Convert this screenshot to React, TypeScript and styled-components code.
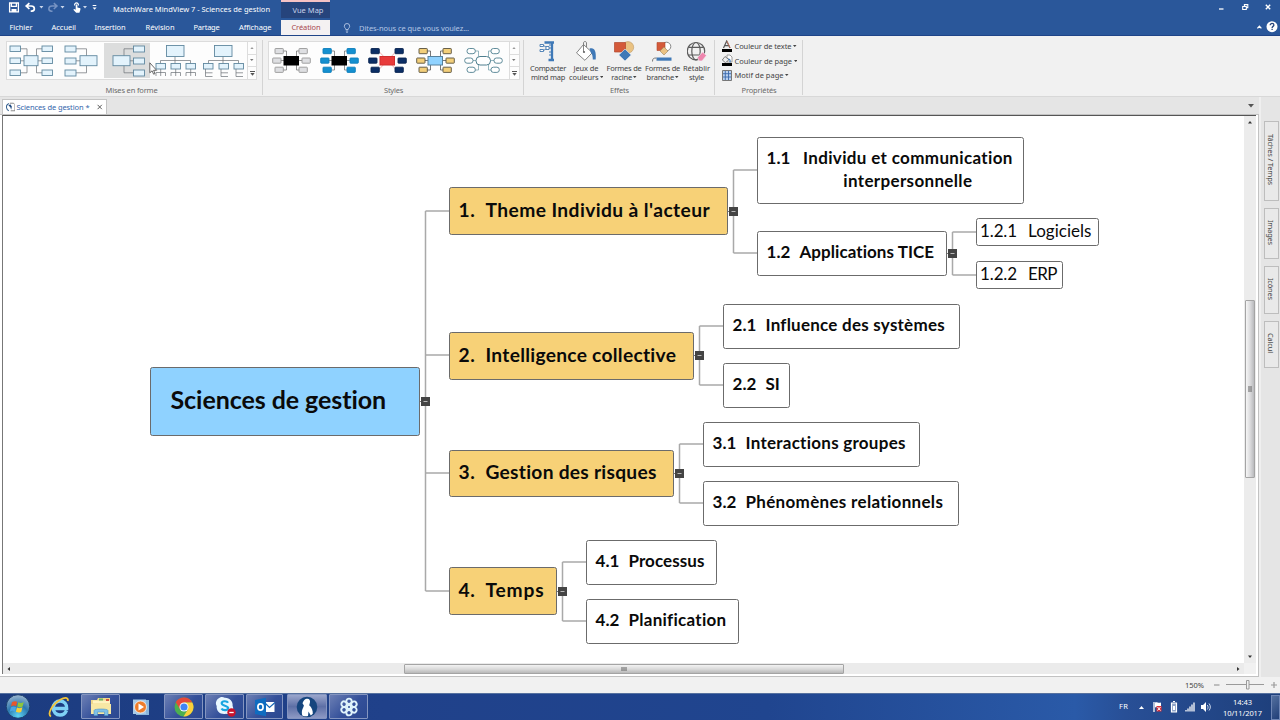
import React, { useLayoutEffect, useRef, useState } from "react";
import styled, { createGlobalStyle } from "styled-components";

const GlobalStyle = createGlobalStyle`
  * { box-sizing: border-box; }
  body { margin: 0; overflow: hidden; background: #f1f1f1; }
`;

const UI_FONT = `"Noto Sans", "Open Sans", sans-serif`;

/* ---------- Text that tracks out to a given length ---------- */

const FitText = styled.span`
  display: inline-block;
  flex: none;
  white-space: pre;
`;

function Fit({ w, children, className, vertical }: { w: number; children: string; className?: string; vertical?: boolean }) {
  const ref = useRef<HTMLSpanElement>(null);
  const [spacing, setSpacing] = useState(0);
  useLayoutEffect(() => {
    const box = ref.current!.getBoundingClientRect();
    setSpacing((w - (vertical ? box.height : box.width)) / children.length);
  }, [w, children, vertical]);
  return (
    <FitText ref={ref} className={className} style={{ letterSpacing: `${spacing}px` }}>
      {children}
    </FitText>
  );
}

/* ---------- Window ---------- */

const Window = styled.div`
  width: 1280px;
  height: 720px;
  display: flex;
  flex-direction: column;
  background: #f1f1f1;
  font-family: ${UI_FONT};
  font-size: 7.5px;
  line-height: 10px;
  color: #444;
`;

const Header = styled.header`
  height: 36px;
  flex: none;
  display: flex;
  background: #2a579a;
  border-bottom: 1px solid #1f4488;
  color: #fff;
`;

const HeaderLeft = styled.div`
  width: 281px;
  display: flex;
  flex-direction: column;
`;

const TitleRow = styled.div`
  height: 19px;
  display: flex;
  align-items: center;
`;

const QuickAccess = styled.div`
  width: 113px;
  height: 18px;
  display: flex;
`;

const TabRow = styled.nav`
  height: 17px;
  display: flex;
  align-items: center;
  padding: 1px 0 0 9.5px;
`;

const MenuTab = styled(Fit)<{ $after: number }>`
  margin-right: ${(p) => p.$after}px;
`;

const Contextual = styled.div`
  width: 49px;
  display: flex;
  flex-direction: column;
`;

const ContextTitle = styled.div`
  height: 18.5px;
  padding-left: 5px;
  border-top: 2px solid #f6c2c4;
  background: #26447c;
  color: #c9d3ea;
  display: flex;
  align-items: center;
  justify-content: center;
`;

const ActiveTab = styled.div`
  margin-top: 1.5px;
  height: 16px;
  background: #f4f1f2;
  color: #a8474f;
  display: flex;
  align-items: center;
  justify-content: center;
  padding-left: 1px;
`;

const HeaderRight = styled.div`
  flex: 1;
  display: flex;
  flex-direction: column;
`;

const WindowButtons = styled.div`
  height: 19px;
  display: flex;
  justify-content: flex-end;
`;

const SearchRow = styled.div`
  height: 17px;
  display: flex;
  align-items: center;
  justify-content: space-between;
  color: #b4c6e4;
`;

const Hint = styled.div`
  display: flex;
  align-items: center;
  gap: 8px;
  padding: 1px 0 0 13px;
`;

/* ---------- Ribbon ---------- */

const Ribbon = styled.section`
  height: 61px;
  flex: none;
  display: flex;
  padding-top: 1px;
  border-bottom: 1px solid #d8d8d8;
  background: #f1f1f1;
`;

const Group = styled.div<{ $w: number }>`
  width: ${(p) => p.$w}px;
  display: flex;
  flex-direction: column;
  align-items: center;
  justify-content: space-between;
  padding: 4px 0 1.5px;
  background: linear-gradient(#d4d4d4, #d4d4d4) right 3px / 1px 55px no-repeat;
  flex: none;
`;

const GroupLabel = styled.div`
  display: flex;
  color: #6a6a6a;
`;

const Gallery = styled.div`
  height: 39px;
  display: flex;
  background: #fdfdfd;
  border: 1px solid #dcdcdc;
`;

const Thumb = styled.div<{ $on?: boolean }>`
  width: 48px;
  height: 37px;
  background: ${(p) => (p.$on ? "linear-gradient(#dcdddd, #dcdddd) 1px 1px / 46px 35px no-repeat" : "transparent")};
  svg { display: block; }
`;

const Steps = styled.div<{ $w: number }>`
  width: ${(p) => p.$w}px;
  display: flex;
  flex-direction: column;
  border-left: 1px solid #ddd;
`;

const Step = styled.div`
  flex: 1;
  display: flex;
  align-items: center;
  justify-content: center;
  & + & { border-top: 1px solid #ddd; }
`;

const EffectRow = styled.div`
  display: flex;
  width: 100%;
  height: 41px;
  padding-left: 5px;
`;

const BigButton = styled.div<{ $w: number }>`
  width: ${(p) => p.$w}px;
  flex: none;
  display: flex;
  flex-direction: column;
  align-items: center;
  line-height: 8.5px;
  & > svg { display: block; flex: none; margin-bottom: 2px; }
`;

const Line = styled.div`
  display: flex;
  align-items: center;
  gap: 1px;
  height: 8.5px;
  flex: none;
`;

const Props = styled.div`
  width: 100%;
  height: 41px;
  margin-top: -2px;
  padding-left: 6px;
  display: flex;
  flex-direction: column;
`;

const PropRow = styled.div`
  height: 14.6px;
  flex: none;
  display: flex;
  align-items: center;
  gap: 1.5px;
  color: #444;
`;

/* ---------- Document strip and side panel ---------- */

const Workspace = styled.main`
  height: 580px;
  flex: none;
  display: flex;
  background: #e5e5e5;
`;

const DocumentArea = styled.div`
  width: 1259px;
  display: flex;
  flex-direction: column;
`;

const DocStrip = styled.div`
  height: 17px;
  flex: none;
  display: flex;
  align-items: flex-end;
  justify-content: space-between;
  padding: 0 5px 0 2px;
`;

const DocTab = styled.div`
  width: 105px;
  height: 15px;
  background: #fff;
  border: 1px solid #c4c4c4;
  border-bottom: none;
  display: flex;
  align-items: center;
  padding: 0 0 1px 2.5px;
  gap: 1.5px;
  color: #3465ab;
`;

const StripArrow = styled.div`
  height: 10px;
  display: flex;
`;

const Frame = styled.div`
  flex: 1;
  display: flex;
  border: 1px solid #c2c2c2;
  border-left: none;
  background: #fff;
  padding: 0 2px 2px 2px;
  min-height: 0;
`;

const Sheet = styled.div`
  flex: 1;
  display: grid;
  grid-template-columns: 1fr 12px;
  grid-template-rows: 1fr 11px;
  border-top: 1px solid #555;
  border-left: 1px solid #777;
`;

const Canvas = styled.div`
  position: relative;
  overflow: hidden;
  background: #fff;
`;

const VScroll = styled.div`
  display: flex;
  flex-direction: column;
  align-items: center;
  justify-content: space-between;
  padding-right: 1px;
  background: #ececec;
`;

const VThumb = styled.div`
  width: 10px;
  height: 178px;
  margin: 172px 0 auto;
  border: 1px solid #a4a4a4;
  border-radius: 1px;
  background: linear-gradient(90deg, #f6f6f6, #dcdcde 50%, #b9babd);
  display: flex;
  align-items: center;
  justify-content: center;
`;

const HScroll = styled.div`
  display: flex;
  align-items: center;
  justify-content: space-between;
  background: #ebebeb;
`;

const HThumb = styled.div`
  width: 440px;
  height: 10px;
  border: 1px solid #a4a4a4;
  border-radius: 1px;
  background: linear-gradient(#f2f2f2, #dadada 50%, #b8b8b8);
  display: flex;
  align-items: center;
  justify-content: center;
`;

const ScrollCorner = styled.div`
  background: #f1f1f1;
`;

const SidePanel = styled.aside`
  flex: 1;
  border-left: 2px solid #efefef;
  padding: 24px 0 0 3px;
  display: flex;
  flex-direction: column;
  gap: 7px;
`;

const SideTab = styled.div<{ $h: number }>`
  width: 15px;
  height: ${(p) => p.$h}px;
  flex: none;
  border: 1px solid #bdbdbd;
  background: #e9e9e9;
  writing-mode: vertical-rl;
  display: flex;
  align-items: center;
  justify-content: center;
  padding: 0 1px 3px 0;
`;

/* ---------- Mind map ---------- */

type Level = 0 | 1 | 2 | 3;

const nodeFill = ["#8fd2ff", "#f7d177", "#fff", "#fff"];
const nodeSize = [25, 19.2, 17, 17];
const nodeGap = [0, 10, 9, 11];
const nodeLift = [5, 4, 4, 3];
const nodeInset = [19.5, 8.5, 8.5, 3];

const NodeBox = styled.div<{ $x: number; $y: number; $w: number; $h: number; $level: Level }>`
  position: absolute;
  left: ${(p) => p.$x - 3}px;
  top: ${(p) => p.$y - 116}px;
  width: ${(p) => p.$w}px;
  height: ${(p) => p.$h}px;
  padding: 0 0 ${(p) => nodeLift[p.$level]}px ${(p) => nodeInset[p.$level]}px;
  display: flex;
  align-items: center;
  border: 1px solid #6b6b6b;
  border-radius: 2.5px;
  background: ${(p) => nodeFill[p.$level]};
  color: #0a0a0a;
  font-family: Lato, "Open Sans", sans-serif;
  font-size: ${(p) => nodeSize[p.$level]}px;
  font-weight: ${(p) => (p.$level === 3 ? 400 : 700)};
  line-height: 23px;
`;

const NodeNumber = styled.div<{ $level: Level; $gap?: number; $top?: boolean }>`
  display: flex;
  margin-right: ${(p) => p.$gap ?? nodeGap[p.$level]}px;
  align-self: ${(p) => (p.$top ? "flex-start" : "center")};
  margin-top: ${(p) => (p.$top ? 8 : 0)}px;
`;

const NodeLines = styled.div`
  display: flex;
  flex-direction: column;
  align-items: center;
`;

const Links = styled.svg`
  position: absolute;
  left: -3px;
  top: -116px;
`;

interface MapNode {
  x: number; y: number; w: number; h: number; level: Level;
  num?: string; numW?: number; gap?: number;
  lines: [string, number][];
}

const nodes: MapNode[] = [
  { x: 150, y: 367, w: 270, h: 69, level: 0, lines: [["Sciences de gestion", 216]] },
  { x: 449, y: 187, w: 279, h: 48, level: 1, num: "1.", numW: 17, lines: [["Theme Individu à l'acteur", 224.5]] },
  { x: 449, y: 332, w: 245, h: 48, level: 1, num: "2.", numW: 17, lines: [["Intelligence collective", 191]] },
  { x: 449, y: 450, w: 225, h: 47, level: 1, num: "3.", numW: 17, lines: [["Gestion des risques", 171.5]] },
  { x: 449, y: 567, w: 108, h: 48, level: 1, num: "4.", numW: 17, lines: [["Temps", 59]] },
  { x: 757, y: 137, w: 267, h: 67, level: 2, num: "1.1", numW: 24, gap: 12.5, lines: [["Individu et communication", 210], ["interpersonnelle", 129]] },
  { x: 757, y: 231, w: 190, h: 45, level: 2, num: "1.2", numW: 24, lines: [["Applications TICE", 135]] },
  { x: 723, y: 304, w: 237, h: 45, level: 2, num: "2.1", numW: 24, lines: [["Influence des systèmes", 179.5]] },
  { x: 723, y: 363, w: 67, h: 45, level: 2, num: "2.2", numW: 24, lines: [["SI", 14]] },
  { x: 703, y: 422, w: 217, h: 45, level: 2, num: "3.1", numW: 24, lines: [["Interactions groupes", 160.5]] },
  { x: 703, y: 481, w: 256, h: 45, level: 2, num: "3.2", numW: 24, lines: [["Phénomènes relationnels", 198]] },
  { x: 586, y: 540, w: 131, h: 45, level: 2, num: "4.1", numW: 24, lines: [["Processus", 76]] },
  { x: 586, y: 599, w: 153, h: 45, level: 2, num: "4.2", numW: 24, lines: [["Planification", 98]] },
  { x: 976, y: 218, w: 123, h: 28, level: 3, num: "1.2.1", numW: 37, lines: [["Logiciels", 63.5]] },
  { x: 976, y: 261, w: 87, h: 28, level: 3, num: "1.2.2", numW: 37, lines: [["ERP", 29]] },
];

const forks = [
  { x: 425.5, from: 420, y: 401.5, to: 449, ends: [211, 355, 473, 591] },
  { x: 733.5, from: 728, y: 211.5, to: 757, ends: [170, 253] },
  { x: 952.5, from: 947, y: 253.5, to: 976, ends: [232, 275] },
  { x: 699.5, from: 694, y: 355.5, to: 723, ends: [326, 385] },
  { x: 679.5, from: 674, y: 473.5, to: 703, ends: [444, 503] },
  { x: 562.5, from: 557, y: 591.5, to: 586, ends: [562, 621] },
];

function MindMap() {
  return (
    <Canvas>
      <Links width="1245" height="663" viewBox="0 0 1245 663">
        {forks.map((f) => (
          <g key={f.x}>
            <path
              d={`M${f.x} ${f.ends[0]}V${f.ends[f.ends.length - 1]}` + f.ends.map((e) => `M${f.x} ${e}H${f.to}`).join("")}
              fill="none" stroke="#a9a9a9" strokeWidth="1.5"
            />
            <path d={`M${f.from} ${f.y}H${f.x}`} stroke="#777" />
            <rect x={f.x - 4.5} y={f.y - 4.5} width="9" height="9" fill="#444" />
            <path d={`M${f.x - 2} ${f.y}h4`} stroke="#b8b8b8" />
          </g>
        ))}
      </Links>
      {nodes.map((n) => (
        <NodeBox key={n.lines[0][0]} $x={n.x} $y={n.y} $w={n.w} $h={n.h} $level={n.level}>
          {n.num && (
            <NodeNumber $level={n.level} $gap={n.gap} $top={n.lines.length > 1}>
              <Fit w={n.numW!}>{n.num}</Fit>
            </NodeNumber>
          )}
          <NodeLines>
            {n.lines.map(([t, w]) => <Fit key={t} w={w}>{t}</Fit>)}
          </NodeLines>
        </NodeBox>
      ))}
    </Canvas>
  );
}

/* ---------- Status bar and taskbar ---------- */

const StatusBar = styled.div`
  height: 16px;
  flex: none;
  display: flex;
  align-items: center;
  justify-content: flex-end;
  gap: 9px;
  padding-right: 2px;
  background: #f1f1f1;
`;

const Taskbar = styled.footer`
  height: 27px;
  flex: none;
  display: flex;
  justify-content: space-between;
  border-top: 1px solid #56719f;
  background: linear-gradient(90deg, #1c3c80, #20418a 30%, #20458f 60%, #2a5aa8 84%, #284f96 88%, #1e3f7b);
  color: #fff;
`;

const Apps = styled.div`
  display: flex;
`;

const AppButton = styled.div<{ $w: number; $state?: "open" | "active"; $gap?: number }>`
  width: ${(p) => p.$w}px;
  margin-left: ${(p) => p.$gap ?? 0}px;
  height: 25px;
  display: flex;
  align-items: center;
  justify-content: center;
  border-radius: 1px;
  border: 1px solid ${(p) => (p.$state ? "#8495c0" : "transparent")};
  background: ${(p) =>
    p.$state === "active"
      ? "linear-gradient(#9aa6cc, #5d6fa6 50%, #8d99c4)"
      : p.$state === "open"
        ? "linear-gradient(135deg, #6c7fb4, #34509a 55%, #2b4890)"
        : "transparent"};
  svg { display: block; flex: none; }
`;

const Tray = styled.div`
  display: flex;
  align-items: center;
`;

const Language = styled.div`
  display: flex;
  width: 17px;
  padding-bottom: 3px;
`;

const Clock = styled.div`
  display: flex;
  flex-direction: column;
  align-items: center;
  line-height: 11px;
  margin-left: 9px;
  width: 43px;
  padding-top: 1px;
`;

const ShowDesktop = styled.div`
  width: 9px;
  height: 25px;
  margin-left: 7px;
  border: 1px solid #6d85b4;
  background: linear-gradient(135deg, #54709f, #203f78);
`;

/* ---------- Small drawings ---------- */

const Caret = ({ c = "#444", s = 4 }: { c?: string; s?: number }) => (
  <svg width={s} height={s * 0.6} viewBox="0 0 5 3"><path d="M0 0h5L2.5 3z" fill={c} /></svg>
);

const UpCaret = ({ c = "#444" }: { c?: string }) => (
  <svg width="4" height="2.5" viewBox="0 0 5 3"><path d="M0 3h5L2.5 0z" fill={c} /></svg>
);

const QuickIcons = () => (
  <svg width="113" height="15" viewBox="0 0 113 15" fill="none" stroke="#fff">
    <path d="M9.6 3h8.8v8.8H9.6z M11.4 3.2v3.2h5V3.2" strokeWidth="1.3" />
    <path d="M11.5 9h5v3h-5z" fill="#fff" stroke="none" />
    <path d="M29.4 3.1 26.2 6l3.2 3M26.6 6h4.6c4 0 4.2 4.8.5 5.2h-1" strokeWidth="1.7" />
    <path d="M39.4 6h4l-2 2.4zM60.5 6h4l-2 2.4zM83 6h4l-2 2.4z" fill="#c9d5ea" stroke="none" />
    <path d="M53.8 3.1 57 6l-3.2 3M56.6 6H52c-4 0-4.2 4.8-.5 5.2h1" stroke="#7693c3" strokeWidth="1.5" />
    <path d="M74.6 5.5c-.6-3.5 4.4-3.5 3.8 0" strokeWidth="1.1" />
    <path d="M75.7 4.5h1.7v3l3 .7v1.6l-1 3h-3.2L73.3 9.8l.9-.9 1.5.8z" fill="#fff" stroke="none" />
    <path d="M92.7 5.5h3.6" />
    <path d="M92.6 7.4h4l-2 2.4z" fill="#fff" stroke="none" />
  </svg>
);

const WindowIcons = () => (
  <svg width="67" height="19" viewBox="1213 0 67 19" fill="none" stroke="#fff">
    <path d="M1219 9h4.5" strokeWidth="1.3" />
    <path d="M1242.7 6.5h3.6v3h-3.6zM1244.4 6.2V4.6h3.4v3h-1.4" strokeWidth="1.1" />
    <path d="m1265.8 4.8 4.4 4.4m0-4.4-4.4 4.4" strokeWidth="1.4" />
  </svg>
);

const HelpIcons = () => (
  <svg width="26" height="15" viewBox="1254 20 26 15" fill="none" stroke="#fff">
    <path d="m1257.4 28.4 2-2.2 2 2.2" strokeWidth="1.3" />
    <circle cx="1272" cy="26.7" r="5.5" fill="#fff" stroke="none" />
    <path d="M1270.2 25.2c0-2.4 3.7-2.2 3.7-.1 0 1.4-1.8 1.2-1.8 2.8M1272.1 28.8v1.3" stroke="#26447c" strokeWidth="1.3" />
  </svg>
);

const Bulb = () => (
  <svg width="8" height="10" viewBox="0 0 8 10" fill="none" stroke="#b4c6e4" strokeWidth=".9">
    <path d="M2.8 6.5C2.8 5.2 1.3 4.8 1.3 3.2a2.7 2.7 0 0 1 5.4 0c0 1.6-1.5 2-1.5 3.3zM2.8 8h2.4M3.2 9.3h1.6" />
  </svg>
);

const lineC = "#6a7075";
const box = (x: number, y: number, w: number, h: number) => (
  <rect key={`${x}-${y}`} x={x} y={y} width={w} height={h} fill="#e3f3fc" stroke="#60889f" strokeWidth=".9" />
);

const layouts = [
  <g key="both">
    <path d="M12 6.8h6.5v24H12M12 18.8h27M34 6.8h-6v24h6" fill="none" stroke={lineC} strokeWidth=".7" />
    {[4, 16, 28].flatMap((y) => [box(1.5, y, 10.5, 5.5), box(33.5, y, 10.5, 5.5)])}
    {box(15.5, 13.7, 14, 10)}
  </g>,
  <g key="left">
    <path d="M19 6.8h11v24H19M19 18.8h6" fill="none" stroke={lineC} strokeWidth=".7" />
    {[4, 16, 28].map((y) => box(8.5, y, 11, 6))}
    {box(23.5, 13.7, 17, 10)}
  </g>,
  <g key="right">
    <path d="M30 6.8H19.5v24H30M24 18.8h6" fill="none" stroke={lineC} strokeWidth=".7" />
    {[4, 16, 28].map((y) => box(29, y, 11, 6))}
    {box(8.5, 13.7, 17, 10)}
  </g>,
  <g key="down">
    <path d="M22.5 14v8M8 22v-3.5h30V22" fill="none" stroke={lineC} strokeWidth=".7" />
    {box(14, 3.5, 17.5, 11)}
    {[3.5, 18.5, 33.5].map((x) => box(x, 21.5, 9.5, 5.5))}
    {[3.5, 18.5, 33.5].map((x) => <path key={x} d={`M${x + 4.7} 27v7M${x} 34v-3.5h9.5V34`} fill="none" stroke={lineC} strokeWidth=".7" />)}
  </g>,
  <g key="tree">
    <path d="M22.5 14v8M8 22v-3.5h30V22" fill="none" stroke={lineC} strokeWidth=".7" />
    {box(14, 3.5, 17.5, 11)}
    {[3, 18.5, 33.5].map((x) => box(x, 21.5, 9.5, 5.5))}
    {[3, 18.5, 33.5].map((x) => <path key={x} d={`M${x + 2} 27v7.5h7M${x + 2} 30.8h7`} fill="none" stroke={lineC} strokeWidth=".7" />)}
  </g>,
];

interface Palette { leaf: string; edge: string; core: string; coreEdge: string; link: string; round?: boolean; x?: boolean }

const palettes: Palette[] = [
  { leaf: "#dedfe2", edge: "#999", core: "#000", coreEdge: "#000", link: "#777" },
  { leaf: "#1490d0", edge: "#0f7fbb", core: "#000", coreEdge: "#000", link: "#777" },
  { leaf: "#0c2f66", edge: "#0a2550", core: "#e83a3a", coreEdge: "#d02f2f", link: "#f09a9a", x: true },
  { leaf: "#f3cf7a", edge: "#57503e", core: "#8fd2ff", coreEdge: "#56809c", link: "#555" },
  { leaf: "#fff", edge: "#4e7f8f", core: "#fff", coreEdge: "#4e7f8f", link: "#7ba3ae", round: true },
];

const StyleThumb = ({ p }: { p: Palette }) => (
  <svg width="48" height="37" viewBox="1.5 0 48 37">
    <path
      d={p.x ? "M15 9l18 19M33 9 15 28" : "M15 9h4v19h-4M33 9h-4v19h4M12 18.5h25"}
      fill="none" stroke={p.link} strokeWidth=".8"
    />
    {[[7.5, 6.5], [31.5, 6.5], [5.2, 16], [34.5, 16], [7.5, 25.2], [31.5, 25.2]].map(([x, y]) => (
      <rect key={`${x}${y}`} x={x} y={y} width="8.3" height="5.2" rx={p.round ? 2.4 : 0.6} fill={p.leaf} stroke={p.edge} strokeWidth=".9" />
    ))}
    <rect x="16.5" y="14.5" width="14.5" height="8.5" rx={p.round ? 4 : 0} fill={p.core} stroke={p.coreEdge} />
  </svg>
);

const effectIcons = {
  compact: (
    <svg width="20" height="21" viewBox="0 0 20 21">
      <path d="M6.5 1.5H16M14 1v18M10.5 19H16" stroke="#3f79b7" strokeWidth="2.3" fill="none" />
      <path d="M11 4h3M11 7h3M11 11h3M11 14h3" stroke="#3f79b7" />
      <path d="M2 3.5h3.5v2H2zM2 8.5h3.5v2H2zM8 5.5h3v3H8zM5.5 4.5 8 6M5.5 9.5 8 8" fill="#fff" stroke="#4479b0" strokeWidth=".9" />
    </svg>
  ),
  bucket: (
    <svg width="22" height="21" viewBox="0 0 22 21">
      <path d="m8.5 3.5 8.8 8.2-7.4 7.6-8.4-7.4z" fill="#fff" stroke="#777" strokeWidth=".9" />
      <path d="M8.5 11V2c0-2 3-2 3 0v4" fill="none" stroke="#777" strokeWidth=".9" />
      <circle cx="9" cy="11" r="1.1" fill="#666" />
      <path d="M14.5 7.5c4.5-1.5 7 1.5 6.2 11h-2.9c0-3.5-.6-5.5-2-7z" fill="#3f79b7" />
    </svg>
  ),
  root: (
    <svg width="22" height="21" viewBox="0 0 22 21">
      <circle cx="15" cy="6.3" r="5.7" fill="#eac282" stroke="#bd9b68" strokeWidth=".6" />
      <path d="M1.5 1.5h11v9.5h-11z" fill="#d45a3a" stroke="#b0482e" strokeWidth=".7" />
      <path d="m12 8 6.2 6-6.2 6-6.2-6z" fill="#3f79b7" stroke="#f1f1f1" strokeWidth=".6" />
    </svg>
  ),
  branch: (
    <svg width="22" height="21" viewBox="1 0 22 21">
      <circle cx="15.5" cy="5.5" r="4.3" fill="#fff" stroke="#888" />
      <path d="M6 1.5h8v8H6z" fill="#d45a3a" stroke="#b0482e" strokeWidth=".6" />
      <path d="m13 6 4 4-4 4-4-4z" fill="#eac282" stroke="#9a845f" strokeWidth=".6" />
      <path d="M5.5 16.5h15v3.2h-15z" fill="#3f79b7" />
      <path d="M1.5 20.5c0-3 1-3.5 4-3.5" fill="none" stroke="#777" />
    </svg>
  ),
  reset: (
    <svg width="20" height="21" viewBox="0 0 20 21">
      <g fill="none" stroke="#5d5d5d" strokeWidth="1.2">
        <circle cx="9" cy="10.2" r="8.7" />
        <ellipse cx="9" cy="10.2" rx="4.2" ry="8.7" />
        <path d="M1.2 6.3h15.6M1.2 14h15.6" />
      </g>
      <path d="m10.5 16.5 5-5.5 4 3.5-4.5 5.5h-3z" fill="#ee86ae" stroke="#f1f1f1" strokeWidth=".7" />
    </svg>
  ),
};

const TextColorIcon = () => (
  <svg width="12" height="13" viewBox="0 0 12 13">
    <path d="M2.5 8 5.7 1 9 8M3.7 5.6h4" fill="none" stroke="#555" strokeWidth="1.2" />
    <path d="M6 1.2 9.2 8" stroke="#d8795f" strokeWidth=".8" fill="none" />
    <path d="M1 9h10v3H1z" fill="#000" />
  </svg>
);

const PageColorIcon = () => (
  <svg width="12" height="13" viewBox="0 0 12 13">
    <path d="M6 1h3l2 2v5H6z" fill="#fff" stroke="#888" strokeWidth=".8" />
    <path d="m4 2.5 4 3.2-3.5 3L1.3 6z" fill="#eee" stroke="#666" strokeWidth=".8" />
    <path d="M7 5c2 0 2.4 1.5 2 3.3" fill="none" stroke="#3f79b7" strokeWidth="1.2" />
    <path d="M1 9h10v3H1z" fill="#000" />
  </svg>
);

const PatternIcon = () => (
  <svg width="12" height="13" viewBox="0 0 12 13">
    <path d="M1.5 1.5h9v10h-9z" fill="#b9d0ee" stroke="#777" />
    <path d="M4.3 2v9M7.5 2v9M2 4.7h8M2 8h8" stroke="#3a69ac" strokeWidth=".9" />
  </svg>
);

const DocIcon = () => (
  <svg width="10" height="10" viewBox="0 0 10 10">
    <path d="M3 1.2C1 2 .3 4 .5 5.5.7 7 1.5 8.5 3 9" fill="none" stroke="#35608f" strokeWidth="1.1" />
    <path d="M4 1h4l1.5 1.5V9H5" fill="#fff" stroke="#666" strokeWidth=".8" />
    <path d="M2.5 3.5 4.5 2l1.7 2.5L5.5 8 4.5 5z" fill="#1f4a80" />
  </svg>
);

const appIcons = {
  start: (
    <svg width="26" height="25" viewBox="0 0 26 25">
      <defs>
        <radialGradient id="orb" cx=".5" cy=".9" r=".9">
          <stop offset="0" stopColor="#5fd6f4" /><stop offset=".5" stopColor="#2b78b0" /><stop offset="1" stopColor="#9fb7cf" />
        </radialGradient>
      </defs>
      <circle cx="13" cy="12.5" r="11.8" fill="url(#orb)" stroke="#1b3f6e" />
      <path d="M7 8.2c2-1.4 3.6-1.2 5.2-.4l-1 4.4c-1.7-.9-3.3-.9-5.2.3z" fill="#e8562b" />
      <path d="M13.2 8.2c2 1 3.6 1 5.6-.3l-1.2 4.6c-1.8 1.2-3.6 1.1-5.4.1z" fill="#8cc63c" />
      <path d="M5.8 13.4c1.9-1.2 3.5-1.1 5.2-.3L9.9 17.4c-1.6-.8-3.2-.8-5.1.3z" fill="#4aa5e4" />
      <path d="M12 13.5c1.9 1 3.6 1 5.4-.2l-1.1 4.4c-1.8 1.2-3.5 1.1-5.4.1z" fill="#fbce33" />
    </svg>
  ),
  ie: (
    <svg width="22" height="22" viewBox="0 0 22 22" fill="none">
      <path d="M18.5 14.5C17 18 14.5 19 12 19c-4 0-6.8-3-6.8-7s3-7 6.9-7c4.2 0 6.8 3 6.6 7.5H6.5" stroke="#7fd1f5" strokeWidth="3.3" />
      <path d="M3 20.5C-1 18 4 8.5 12.5 3.5c4-2.4 8-2.6 7.3 1.5" stroke="#f2c43a" strokeWidth="1.8" />
    </svg>
  ),
  explorer: (
    <svg width="22" height="20" viewBox="0 0 22 20">
      <path d="M1 3h6l1-2h12v16H1z" fill="#efd98b" />
      <path d="M3 3.5h17v3H3z" fill="#fff4c0" />
      <path d="M9 1.5h4v2H9z" fill="#6bb463" /><path d="M16 2h3v2h-3z" fill="#d5533f" />
      <path d="M1 7h20v10H1z" fill="#f7e8a4" />
      <path d="M4 18.5v-5c0-2 14-2 14 0v5h-3.5V15h-7v3.5z" fill="#7fc0e8" stroke="#4c93c4" strokeWidth=".6" />
    </svg>
  ),
  player: (
    <svg width="18" height="18" viewBox="0 0 18 18">
      <path d="M4 2h13v15H4z" fill="#8ab7dc" /><path d="M1 1.5h13v14.5H1z" fill="#a7cbe8" />
      <circle cx="8.5" cy="9" r="6" fill="#ee7d2b" stroke="#fff" strokeWidth=".7" />
      <path d="M6.5 5.5 12 9l-5.5 3.5z" fill="#fff" />
    </svg>
  ),
  chrome: (
    <svg width="20" height="20" viewBox="0 0 20 20">
      <circle cx="10" cy="10" r="9.5" fill="#4caf50" />
      <path d="M1.8 5.2A9.5 9.5 0 0 1 18.3 5.5H10L6 12.3z" fill="#e5493a" />
      <path d="M18.3 5.5A9.5 9.5 0 0 1 9.5 19.5L14 12.3 14 8 10 5.5z" fill="#fcd03b" />
      <circle cx="10" cy="10" r="4.5" fill="#fff" /><circle cx="10" cy="10" r="3.6" fill="#4285f4" />
    </svg>
  ),
  skype: (
    <svg width="22" height="22" viewBox="0 0 22 22">
      <path d="M6 1.5c2-.8 3.5-.3 4.6.3 5-.3 8.6 3.7 8 8.2 2 4-1.2 9-6.6 7.8C6.5 19 2 15 2.7 10 .8 7 2.5 3 6 1.5z" fill="#e8f7ff" />
      <path d="M14 6.8C13 4.6 7.7 4.7 7.7 7.3c0 3 6.4 1.8 6.4 4.8 0 2.6-5.4 2.7-6.6.3" fill="none" stroke="#18a5e0" strokeWidth="2.2" />
      <circle cx="17.5" cy="16.5" r="4.2" fill="#c8142d" /><path d="M15.3 16.5h4.4" stroke="#fff" strokeWidth="1.3" />
    </svg>
  ),
  outlook: (
    <svg width="22" height="20" viewBox="0 0 22 20">
      <path d="M10 5h10.5v10H10z" fill="#fff" /><path d="m11 6 4.5 4.5L21 5.5" stroke="#1766b5" strokeWidth="1.2" fill="none" />
      <path d="M1 3 12 .8v18.4L1 17z" fill="#0f6cc0" />
      <ellipse cx="6.5" cy="10" rx="2.6" ry="3.2" fill="none" stroke="#fff" strokeWidth="1.7" />
    </svg>
  ),
  mind: (
    <svg width="22" height="22" viewBox="0 0 22 22">
      <circle cx="11" cy="11" r="10.3" fill="#15457e" />
      <path d="M10.5 2.8c2.8-.6 4 1.500 3.400 4l-.7 2.500c2.600 2 3.800 5.500 3.600 8.500l-2 1.700-2.300-4-.5 4.500c-2 .6-4.200.4-5.700-.6-1.300-4.600.7-6.600 1.600-9.800L6.500 7.200C7.500 4.500 8.500 3.300 10.500 2.800z" fill="#fff" />
    </svg>
  ),
  flower: (
    <svg width="20" height="20" viewBox="0 0 20 20" fill="none" stroke="#dff3fb" strokeWidth="1.9">
      {[0, 60, 120, 180, 240, 300].map((a) => (
        <circle key={a} cx="10" cy="4.3" r="2.7" transform={`rotate(${a} 10 10)`} />
      ))}
      <circle cx="10" cy="10" r="2" />
    </svg>
  ),
};

const TrayIcons = () => (
  <svg width="76" height="16" viewBox="1137 699 76 16">
    <path d="M1140 709h5l-2.5-3z" fill="#fff" />
    <path d="M1155 702v10" stroke="#fff" strokeWidth="1.3" />
    <path d="M1156 702.5c2-1 3 1 6 0v5c-3 1-4-1-6 0z" fill="#fff" />
    <path d="M1157.5 706h5v5.5h-5z" fill="#d9313b" />
    <path d="m1158.5 707 3 3.5m0-3.5-3 3.5" stroke="#fff" strokeWidth="1" />
    <path d="M1172.5 703h5v9h-5zM1174 701.5h2" fill="#8ea3c8" stroke="#fff" strokeWidth="1.2" />
    <path d="M1174 706h2v4h-2z" fill="#fff" />
    <path d="M1187 710v1.5M1189 708.5v3M1191 706.5v5M1193 704.5v7M1195 702.5v9" stroke="#fff" strokeWidth="1.3" />
    <path d="M1202 705h2l3-3v10l-3-3h-2z" fill="#fff" />
    <path d="M1208.3 705c1 1.5 1 3 0 4.5M1210 703.5c1.8 2 1.8 5 0 7" fill="none" stroke="#dce6f6" strokeWidth=".9" />
  </svg>
);

const ZoomSlider = () => (
  <svg width="65" height="12" viewBox="1213 680 65 12" stroke="#9a9a9a" fill="none">
    <path d="M1214 686h5.5" strokeWidth="1.2" />
    <path d="M1226 685.5h38" />
    <path d="M1246.5 681.5h2.5v8.5h-2.5z" fill="#f1f1f1" />
    <path d="M1271 686h6M1274 683v6" strokeWidth="1.2" />
  </svg>
);

const Cursor = styled.svg`
  position: absolute;
  left: 149px;
  top: 62px;
`;

function GallerySteps({ w }: { w: number }) {
  return (
    <Steps $w={w}>
      <Step><UpCaret c="#999" /></Step>
      <Step><Caret c="#777" s={3.5} /></Step>
      <Step>
        <svg width="5" height="5" viewBox="0 0 5 5"><path d="M0 .5h5" stroke="#555" /><path d="M.3 2h4.4L2.5 4.7z" fill="#555" /></svg>
      </Step>
    </Steps>
  );
}

const taskApps: { id: keyof typeof appIcons; w: number; gap?: number; state?: "open" | "active" }[] = [
  { id: "start", w: 36 },
  { id: "ie", w: 40, gap: 3 },
  { id: "explorer", w: 39, gap: 2, state: "open" },
  { id: "player", w: 40, gap: 1 },
  { id: "chrome", w: 39, gap: 3, state: "open" },
  { id: "skype", w: 39, gap: 2, state: "open" },
  { id: "outlook", w: 37, gap: 2, state: "open" },
  { id: "mind", w: 40, gap: 4, state: "active" },
  { id: "flower", w: 39, gap: 2, state: "open" },
];

export default function App() {
  return (
    <Window>
      <GlobalStyle />
      <Header>
        <HeaderLeft>
          <TitleRow>
            <QuickAccess><QuickIcons /></QuickAccess>
            <Fit w={157}>MatchWare MindView 7 - Sciences de gestion</Fit>
          </TitleRow>
          <TabRow>
            <MenuTab w={23} $after={19}>Fichier</MenuTab>
            <MenuTab w={24.5} $after={18.5}>Accueil</MenuTab>
            <MenuTab w={31} $after={20}>Insertion</MenuTab>
            <MenuTab w={29} $after={19}>Révision</MenuTab>
            <MenuTab w={26} $after={19.5}>Partage</MenuTab>
            <MenuTab w={32.5} $after={0}>Affichage</MenuTab>
          </TabRow>
        </HeaderLeft>
        <Contextual>
          <ContextTitle><Fit w={31}>Vue Map</Fit></ContextTitle>
          <ActiveTab><Fit w={29}>Création</Fit></ActiveTab>
        </Contextual>
        <HeaderRight>
          <WindowButtons><WindowIcons /></WindowButtons>
          <SearchRow>
            <Hint><Bulb /><Fit w={110}>Dites-nous ce que vous voulez...</Fit></Hint>
            <HelpIcons />
          </SearchRow>
        </HeaderRight>
      </Header>

      <Ribbon>
        <Group $w={263}>
          <Gallery>
            {layouts.map((g, i) => (
              <Thumb key={i} $on={i === 2}><svg width="48" height="37" viewBox="-1.5 0 48 37">{g}</svg></Thumb>
            ))}
            <GallerySteps w={9} />
          </Gallery>
          <GroupLabel><Fit w={52}>Mises en forme</Fit></GroupLabel>
        </Group>
        <Group $w={261}>
          <Gallery>
            {palettes.map((p) => <Thumb key={p.leaf}><StyleThumb p={p} /></Thumb>)}
            <GallerySteps w={10} />
          </Gallery>
          <GroupLabel><Fit w={19}>Styles</Fit></GroupLabel>
        </Group>
        <Group $w={191}>
          <EffectRow>
            <BigButton $w={38}>
              {effectIcons.compact}
              <Line><Fit w={36}>Compacter</Fit></Line>
              <Line><Fit w={34}>mind map</Fit></Line>
            </BigButton>
            <BigButton $w={38}>
              {effectIcons.bucket}
              <Line><Fit w={25}>Jeux de</Fit></Line>
              <Line><Fit w={29.5}>couleurs</Fit><Caret s={3.5} /></Line>
            </BigButton>
            <BigButton $w={38}>
              {effectIcons.root}
              <Line><Fit w={35}>Formes de</Fit></Line>
              <Line><Fit w={21}>racine</Fit><Caret s={3.5} /></Line>
            </BigButton>
            <BigButton $w={39}>
              {effectIcons.branch}
              <Line><Fit w={35}>Formes de</Fit></Line>
              <Line><Fit w={27.5}>branche</Fit><Caret s={3.5} /></Line>
            </BigButton>
            <BigButton $w={29}>
              {effectIcons.reset}
              <Line><Fit w={27}>Rétablir</Fit></Line>
              <Line><Fit w={15}>style</Fit></Line>
            </BigButton>
          </EffectRow>
          <GroupLabel><Fit w={19}>Effets</Fit></GroupLabel>
        </Group>
        <Group $w={88}>
          <Props>
            <PropRow><TextColorIcon /><Fit w={57}>Couleur de texte</Fit><Caret s={3.5} /></PropRow>
            <PropRow><PageColorIcon /><Fit w={57.5}>Couleur de page</Fit><Caret s={3.5} /></PropRow>
            <PropRow><PatternIcon /><Fit w={49}>Motif de page</Fit><Caret s={3.5} /></PropRow>
          </Props>
          <GroupLabel><Fit w={35}>Propriétés</Fit></GroupLabel>
        </Group>
      </Ribbon>

      <Workspace>
        <DocumentArea>
          <DocStrip>
            <DocTab>
              <DocIcon />
              <Fit w={73}>Sciences de gestion *</Fit>
              <svg width="16" height="6" viewBox="1.5 0 16 6"><path d="m8.5.7 4.5 4.6m0-4.6L8.5 5.3" stroke="#555" /></svg>
            </DocTab>
            <StripArrow><Caret c="#555" s={6} /></StripArrow>
          </DocStrip>
          <Frame>
            <Sheet>
              <MindMap />
              <VScroll>
                <svg width="10" height="12" viewBox="0 0 10 12"><path d="M3 7.5h4L5 5z" fill="#333" /></svg>
                <VThumb><svg width="6" height="6" viewBox="0 0 6 6"><path d="M1 1h4M1 3h4M1 5h4" stroke="#555" strokeWidth=".9" /></svg></VThumb>
                <svg width="10" height="12" viewBox="0 0 10 12"><path d="M3 4.5h4L5 7z" fill="#333" /></svg>
              </VScroll>
              <HScroll>
                <svg width="11" height="10" viewBox="0 0 11 10"><path d="M7 3v4L4.5 5z" fill="#333" /></svg>
                <HThumb><svg width="6" height="6" viewBox="0 0 6 6"><path d="M1 1v4M3 1v4M5 1v4" stroke="#555" strokeWidth=".9" /></svg></HThumb>
                <svg width="11" height="10" viewBox="0 0 11 10"><path d="M4 3v4L6.5 5z" fill="#333" /></svg>
              </HScroll>
              <ScrollCorner />
            </Sheet>
          </Frame>
        </DocumentArea>
        <SidePanel>
          <SideTab $h={80}><Fit vertical w={51}>Tâches / Temps</Fit></SideTab>
          <SideTab $h={51}><Fit vertical w={25}>Images</Fit></SideTab>
          <SideTab $h={48}><Fit vertical w={22}>Icônes</Fit></SideTab>
          <SideTab $h={47}><Fit vertical w={20}>Calcul</Fit></SideTab>
        </SidePanel>
      </Workspace>

      <StatusBar><Fit w={19}>150%</Fit><ZoomSlider /></StatusBar>

      <Taskbar>
        <Apps>
          {taskApps.map((a) => (
            <AppButton key={a.id} $w={a.w} $gap={a.gap} $state={a.state}>{appIcons[a.id]}</AppButton>
          ))}
        </Apps>
        <Tray>
          <Language><Fit w={9.5}>FR</Fit></Language>
          <TrayIcons />
          <Clock>
            <Fit w={19}>14:43</Fit>
            <Fit w={39}>10/11/2017</Fit>
          </Clock>
          <ShowDesktop />
        </Tray>
      </Taskbar>

      <Cursor width="9" height="13" viewBox="0 0 9 13">
        <path d="M.8.8v10l2.3-2 1.5 3.4 1.4-.6-1.4-3.3h3z" fill="#fff" stroke="#444" strokeWidth=".8" />
      </Cursor>
    </Window>
  );
}
